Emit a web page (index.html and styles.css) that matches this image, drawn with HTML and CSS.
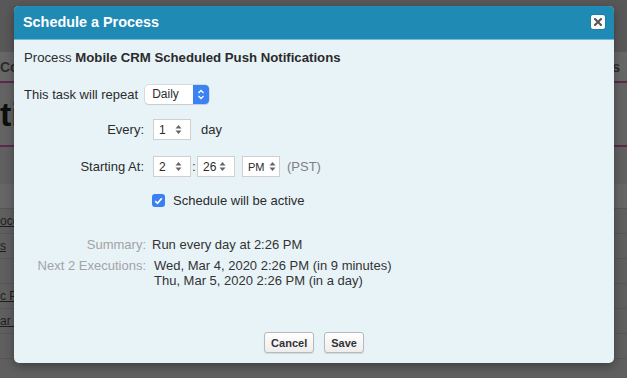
FILE: index.html
```html
<!DOCTYPE html>
<html>
<head>
<meta charset="utf-8">
<link rel="stylesheet" href="styles.css">
</head>
<body>
<div class="page">
  <div class="topbar"></div>
  <div class="tabs"><span class="tab-left">Co</span><span class="tab-right">s</span></div>
  <div class="rule"></div>
  <div class="titlearea"><span class="bigtitle">ti</span></div>
  <div class="rule"></div>
  <div class="gap"></div>
  <div class="row head-row"></div>
  <div class="row"><a class="lnk">oce</a></div>
  <div class="row"><a class="lnk">s</a></div>
  <div class="row"></div>
  <div class="row"><a class="lnk">c P</a></div>
  <div class="row"><a class="lnk">ar F</a></div>
  <div class="row"></div>
</div>
<div class="overlay">
  <div class="dialog">
    <div class="dlg-head">
      <span class="dlg-title">Schedule a Process</span>
      <span class="close">
        <svg width="8" height="8" viewBox="0 0 8 8"><path d="M1 1L7 7M7 1L1 7" stroke="#555" stroke-width="2" stroke-linecap="square"/></svg>
      </span>
    </div>
    <div class="dlg-body">
      <div class="proc">Process <b>Mobile CRM Scheduled Push Notifications</b></div>
      <div class="repeat">
        <span>This task will repeat</span>
        <span class="select">
          <span class="sel-text">Daily</span>
          <span class="sel-btn">
            <svg width="8" height="11" viewBox="0 0 8 11"><path d="M1.5 4L4 1.5L6.5 4M1.5 7L4 9.5L6.5 7" fill="none" stroke="#fff" stroke-width="1.3"/></svg>
          </span>
        </span>
      </div>
      <div class="frow every">
        <span class="lbl">Every:</span>
        <span class="spin"><span>1</span><svg class="arr" width="7" height="11" viewBox="0 0 7 11"><path d="M0.5 4.5L3.5 1L6.5 4.5ZM0.5 6.5L3.5 10L6.5 6.5Z" fill="#666"/></svg></span>
        <span class="unit">day</span>
      </div>
      <div class="frow start">
        <span class="lbl">Starting At:</span>
        <span class="spin"><span>2</span><svg class="arr" width="7" height="11" viewBox="0 0 7 11"><path d="M0.5 4.5L3.5 1L6.5 4.5ZM0.5 6.5L3.5 10L6.5 6.5Z" fill="#666"/></svg></span>
        <span class="colon">:</span>
        <span class="spin"><span>26</span><svg class="arr" width="7" height="11" viewBox="0 0 7 11"><path d="M0.5 4.5L3.5 1L6.5 4.5ZM0.5 6.5L3.5 10L6.5 6.5Z" fill="#666"/></svg></span>
        <span class="spin ampm"><span>PM</span><svg class="arr" width="7" height="11" viewBox="0 0 7 11"><path d="M0.5 4.5L3.5 1L6.5 4.5ZM0.5 6.5L3.5 10L6.5 6.5Z" fill="#666"/></svg></span>
        <span class="tz">(PST)</span>
      </div>
      <div class="active">
        <span class="cb"><svg width="9" height="8" viewBox="0 0 9 8"><path d="M1.2 4.2L3.5 6.3L7.8 1.3" fill="none" stroke="#fff" stroke-width="1.7"/></svg></span>
        <span>Schedule will be active</span>
      </div>
      <div class="summary">
        <span class="slbl">Summary:</span>
        <span class="sval">Run every day at 2:26 PM</span>
        <span class="slbl">Next 2 Executions:</span>
        <span class="sval ex">Wed, Mar 4, 2020 2:26 PM (in 9 minutes)<br>Thu, Mar 5, 2020 2:26 PM (in a day)</span>
      </div>
      <div class="buttons">
        <button class="btn">Cancel</button>
        <button class="btn">Save</button>
      </div>
    </div>
  </div>
</div>
</body>
</html>
```
FILE: styles.css
```css
* { box-sizing: border-box; }
html, body { margin: 0; padding: 0; }
body {
  width: 627px;
  height: 378px;
  overflow: hidden;
  background: #5f5f5f;
  font-family: "Liberation Sans", Arial, sans-serif;
  position: relative;
}
.page { width: 627px; }
.topbar { height: 52px; background: #585858; }
.tabs {
  height: 29px;
  background: #676767;
  display: flex;
  justify-content: space-between;
  align-items: center;
  font-size: 14px;
  font-weight: bold;
  color: #2c2c2c;
}
.tab-left { margin-left: 0; }
.tab-right { margin-right: 7px; }
.rule { height: 2px; background: #5b2a4a; }
.titlearea {
  height: 62px;
  background: #636363;
  display: flex;
  align-items: center;
}
.bigtitle {
  font-size: 34px;
  font-weight: bold;
  color: #0e0e0e;
  margin-left: 0;
}
.gap { height: 37px; background: #606060; }
.row {
  height: 25px;
  border-bottom: 1px solid #565656;
  display: flex;
  align-items: center;
  font-size: 12px;
}
.head-row { background: #666666; }
.lnk {
  color: #1e1e1e;
  text-decoration: underline;
}
.overlay {
  position: absolute;
  inset: 0;
}
.dialog {
  position: absolute;
  left: 14px;
  top: 6px;
  width: 600px;
  height: 357px;
  background: #e8f3f8;
  border-radius: 5px;
  overflow: hidden;
  box-shadow: 0 3px 10px rgba(0,0,0,0.35);
  display: flex;
  flex-direction: column;
  color: #2b2b2b;
}
.dlg-head {
  height: 34px;
  background: #1f8ab4;
  border-bottom: 1px solid #79b9d4;
  display: flex;
  align-items: center;
  justify-content: space-between;
  padding: 0 9px 2px 9px;
}
.dlg-title {
  color: #fff;
  font-weight: bold;
  font-size: 14.4px;
}
.close {
  width: 14px;
  height: 14px;
  background: #fbfbfb;
  border-radius: 2px;
  display: flex;
  align-items: center;
  justify-content: center;
  box-shadow: 0 0 0 1px rgba(0,0,0,0.08);
}
.dlg-body {
  flex: 1;
  padding: 10px 10px 10px 10px;
  font-size: 13px;
  display: flex;
  flex-direction: column;
}
.proc { line-height: 16px; font-size: 13.2px; }
.proc b { font-weight: bold; }
.repeat {
  display: flex;
  align-items: center;
  gap: 7px;
  margin-top: 19px;
  height: 19px;
}
.select {
  display: flex;
  width: 64px;
  height: 19px;
  border-radius: 4px;
  background: #fff;
  box-shadow: 0 0 0 0.5px #c4c4c4, 0 1px 1px rgba(0,0,0,0.12);
  overflow: hidden;
}
.sel-text {
  flex: 1;
  font-size: 12px;
  padding-left: 7px;
  line-height: 19px;
}
.sel-btn {
  width: 16px;
  background: #3b82f2;
  display: flex;
  align-items: center;
  justify-content: center;
}
.frow {
  display: flex;
  align-items: center;
  height: 21px;
}
.every { margin-top: 15px; }
.start { margin-top: 16px; }
.lbl {
  width: 120px;
  text-align: right;
  margin-right: 9px;
}
.spin {
  width: 38px;
  height: 21px;
  background: #fff;
  border: 1px solid #cfcfcf;
  display: flex;
  align-items: center;
  justify-content: space-between;
  padding: 0 8px 0 5px;
  font-size: 12px;
}
.ampm { margin-left: 7px; padding: 0 3px 0 5px; font-size: 11px; }
.arr { display: block; }
.unit { margin-left: 10px; }
.colon { width: 6px; text-align: center; font-size: 12px; }
.tz { margin-left: 7px; color: #808080; }
.active {
  display: flex;
  align-items: center;
  margin-top: 16px;
  padding-left: 128px;
  gap: 8px;
}
.cb {
  width: 13px;
  height: 13px;
  border-radius: 3px;
  background: #3a80f0;
  display: flex;
  align-items: center;
  justify-content: center;
}
.summary {
  display: grid;
  grid-template-columns: 122px auto;
  column-gap: 6px;
  row-gap: 6px;
  margin-top: 29px;
  line-height: 15px;
}
.slbl { text-align: right; color: #a3a3a3; }
.sval { color: #333; }
.ex { padding-left: 2px; }
.buttons {
  margin-top: auto;
  margin-bottom: 0;
  display: flex;
  justify-content: center;
  gap: 10px;
}
.btn {
  font-family: "Liberation Sans", Arial, sans-serif;
  font-size: 11px;
  font-weight: bold;
  color: #333;
  height: 21px;
  padding: 0 6px;
  background: linear-gradient(#ffffff, #ededed);
  border: 1px solid #b9b9b9;
  border-radius: 3px;
  box-shadow: 0 1px 1px rgba(0,0,0,0.1);
}
```
